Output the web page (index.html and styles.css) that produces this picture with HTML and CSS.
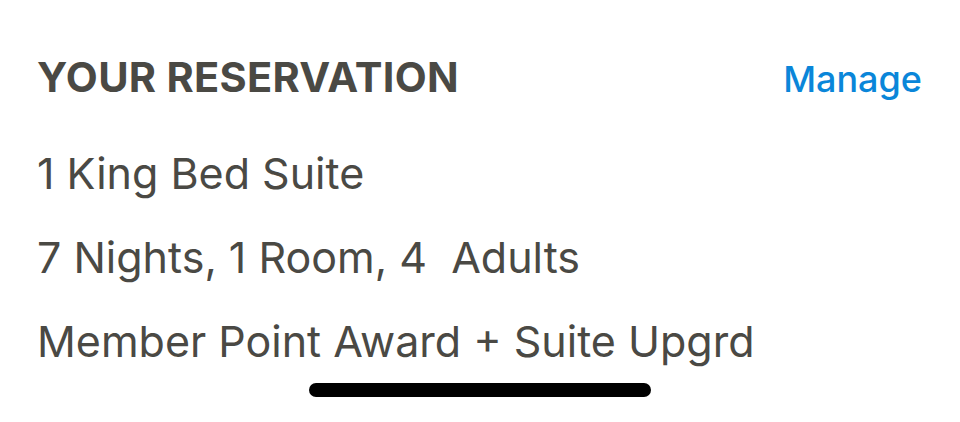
FILE: index.html
```html
<!DOCTYPE html>
<html>
<head>
<meta charset="utf-8">
<link rel="stylesheet" href="styles.css">
</head>
<body>
<div class="screen">
  <div class="header">
    <h2 class="title">YOUR RESERVATION</h2>
    <a class="manage">Manage</a>
  </div>
  <div class="details">
    <p class="line">1 King Bed Suite</p>
    <p class="line">7 Nights, 1 Room, 4&nbsp; Adults</p>
    <p class="line">Member Point Award + Suite Upgrd</p>
  </div>
  <div class="home-bar"></div>
</div>
</body>
</html>
```
FILE: styles.css
```css
html, body {
  margin: 0;
  padding: 0;
  background: #ffffff;
}
body {
  font-family: Inter, "Noto Sans", sans-serif;
  width: 960px;
  height: 422px;
  overflow: hidden;
}
.screen {
  position: relative;
  height: 422px;
  padding: 0 38px 0 37px;
  box-sizing: border-box;
}
.header {
  display: flex;
  justify-content: space-between;
  align-items: baseline;
  padding-top: 52px;
}
.title {
  margin: 0;
  font-size: 41.5px;
  font-weight: 700;
  color: #4a4944;
  line-height: 50px;
  letter-spacing: 0.3px;
}
.manage {
  font-size: 36px;
  font-weight: 500;
  color: #0a86d9;
}
.details {
  margin-top: 29px;
}
.line {
  margin: 0;
  font-size: 43px;
  line-height: 84px;
  color: #4a4944;
  font-weight: 400;
}
.home-bar {
  position: absolute;
  left: 309px;
  top: 383px;
  width: 342px;
  height: 14px;
  border-radius: 7px;
  background: #000;
}
```
